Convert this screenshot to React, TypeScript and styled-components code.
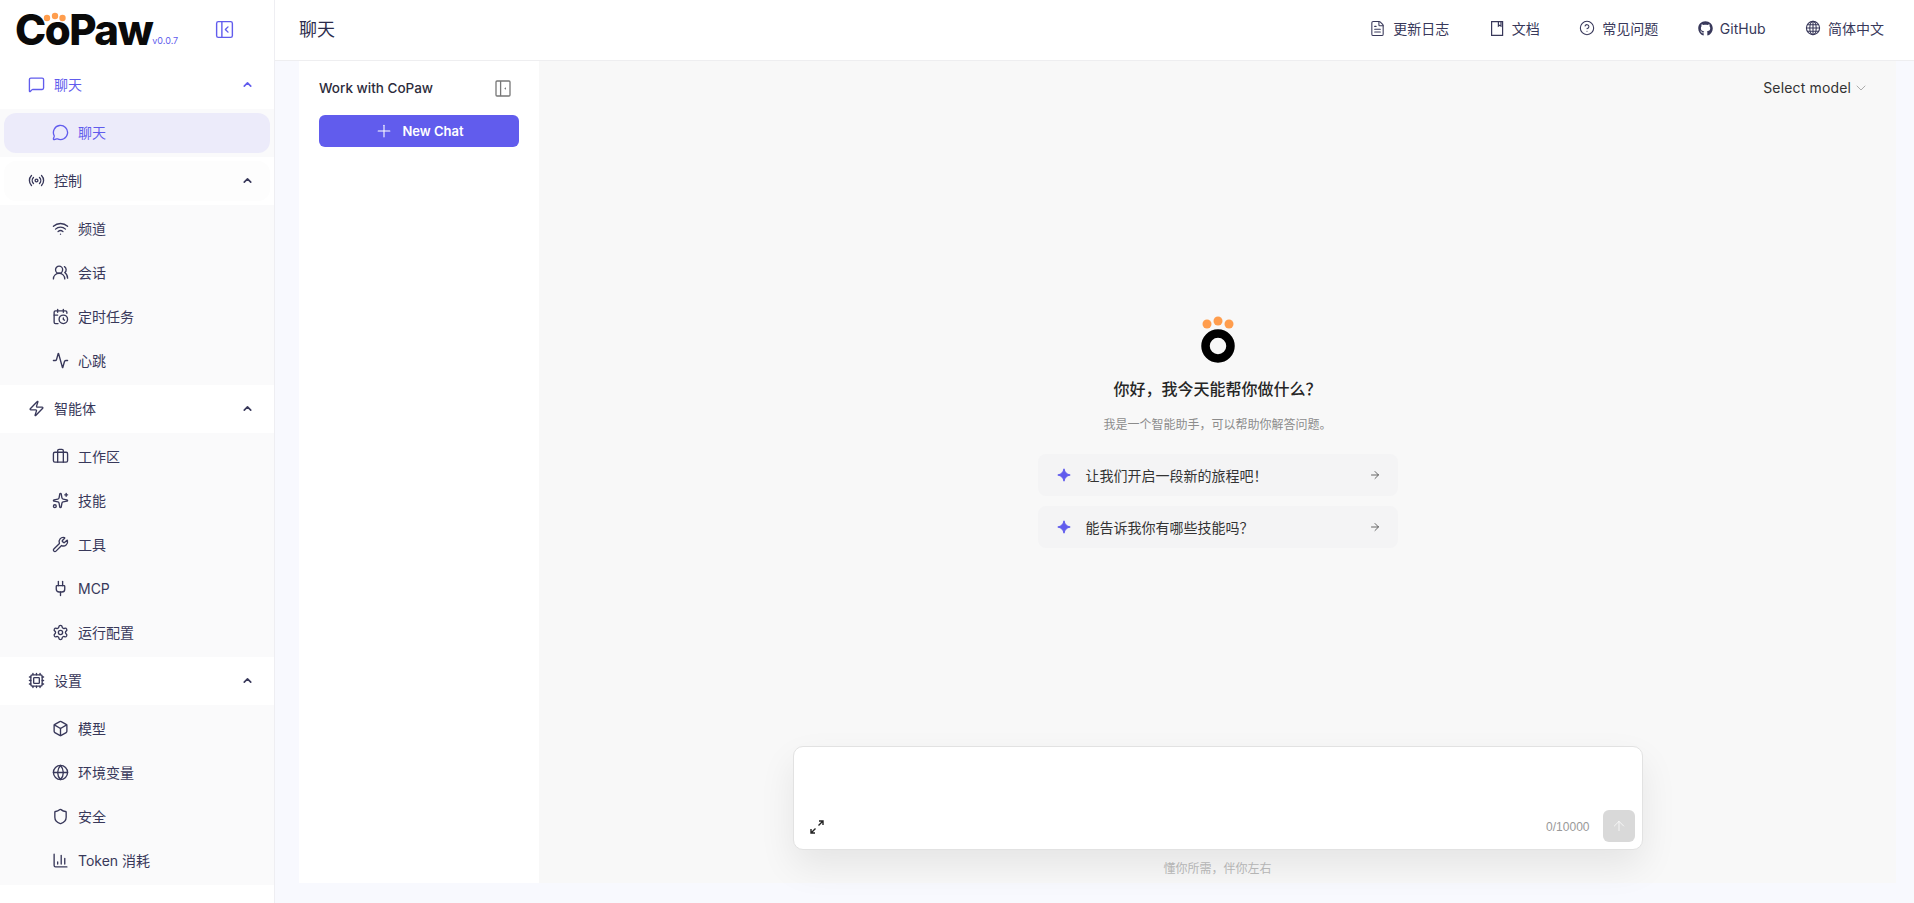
import styled, { createGlobalStyle } from 'styled-components';
import type { ReactNode } from 'react';
import {
  Activity,
  ArrowRight,
  ArrowUp,
  Box,
  Briefcase,
  CalendarClock,
  ChartColumn,
  ChevronDown,
  ChevronUp,
  CircleHelp,
  Cpu,
  FileText,
  Globe,
  MessageCircle,
  MessageSquare,
  PanelLeftClose,
  Plug,
  Plus,
  Radio,
  Settings,
  Shield,
  Sparkles,
  UsersRound,
  Wifi,
  Wrench,
  Zap,
} from 'lucide-react';
import { FaGithub } from 'react-icons/fa';

const GlobalStyle = createGlobalStyle`
  html, body, #root {
    margin: 0;
    height: 100%;
  }

  body {
    overflow: hidden;
    background: #f8f9fe;
    color: #38385a;
    font-family: Inter, "Noto Sans CJK SC", sans-serif;
    font-size: 14px;
  }
`;

const PRIMARY = '#615ced';

const Layout = styled.div`
  display: flex;
  height: 903px;
`;

const Sidebar = styled.aside`
  flex: 0 0 275px;
  box-sizing: border-box;
  background: #fff;
  border-right: 1px solid #eeeef2;
`;

const Brand = styled.div`
  height: 61px;
  box-sizing: border-box;
  display: flex;
  align-items: center;
  justify-content: space-between;
  padding: 0 39px 2px 15px;
  color: ${PRIMARY};
`;

const Logo = styled.div`
  position: relative;
  display: flex;
  align-items: flex-end;
`;

const LogoWord = styled.span`
  color: #0a0a0a;
  font-size: 42px;
  line-height: 38px;
  font-weight: 800;
  letter-spacing: -1.5px;
`;

const LogoVersion = styled.span`
  color: ${PRIMARY};
  font-size: 9px;
  line-height: 12px;
  margin: 0 0 2px 0;
`;

const LogoPaw = styled.svg`
  position: absolute;
  left: 28px;
  top: 0;
`;

const GroupRow = styled.div<{ $active?: boolean; $hovered?: boolean }>`
  height: 40px;
  box-sizing: border-box;
  margin: 4px;
  padding: 0 16px 2px 24px;
  display: flex;
  align-items: center;
  gap: 9px;
  border-radius: 12px;
  background: ${(p) => (p.$hovered ? '#fdfdfd' : 'transparent')};
  color: ${(p) => (p.$active ? PRIMARY : '#38385a')};
`;

const GroupLabel = styled.span`
  flex: 1;
`;

const SubList = styled.div`
  display: flex;
  flex-direction: column;
  gap: 4px;
  padding: 4px;
  background: #fafafb;
`;

const SubItem = styled.div<{ $active?: boolean }>`
  height: 40px;
  box-sizing: border-box;
  padding: 0 0 2px 48px;
  display: flex;
  align-items: center;
  gap: 9px;
  border-radius: 12px;
  background: ${(p) => (p.$active ? '#ecebfa' : 'transparent')};
  color: ${(p) => (p.$active ? PRIMARY : '#38385a')};
`;

const Main = styled.main`
  flex: 1;
  min-width: 0;
  display: flex;
  flex-direction: column;
`;

const TopBar = styled.header`
  flex: 0 0 61px;
  box-sizing: border-box;
  background: #fff;
  border-bottom: 1px solid #eeeef0;
  padding: 0 30px 4px 24px;
  display: flex;
  align-items: center;
  justify-content: space-between;
`;

const PageTitle = styled.h1`
  margin: 0;
  font-size: 18px;
  font-weight: 400;
  color: #2c2c4c;
`;

const TopNav = styled.nav`
  display: flex;
  align-items: center;
  gap: 39.5px;
`;

const TopLink = styled.a`
  display: flex;
  align-items: center;
  gap: 7px;
  font-size: 14px;
  color: #38385a;
`;

const Content = styled.div`
  flex: 1;
  min-height: 0;
  display: flex;
  padding: 0 18px 20px 24px;
`;

const SessionPanel = styled.section`
  flex: 0 0 240px;
  box-sizing: border-box;
  background: #fff;
  padding: 16px 20px;
`;

const SessionHead = styled.div`
  height: 22px;
  display: flex;
  align-items: center;
  justify-content: space-between;
  padding-right: 8px;
  margin-bottom: 16px;
  font-weight: 500;
  color: #2c2c3c;
  font-size: 13.5px;
`;

const NewChatButton = styled.button`
  width: 100%;
  height: 32px;
  border: 0;
  border-radius: 6px;
  background: ${PRIMARY};
  color: #fff;
  display: flex;
  align-items: center;
  justify-content: center;
  gap: 8px;
  font-family: inherit;
  font-size: 13px;
  font-weight: 600;
`;

const ChatPanel = styled.section`
  flex: 1;
  min-width: 0;
  background: #f8f8f8;
  display: flex;
  flex-direction: column;
  align-items: center;
`;

const ModelBar = styled.div`
  align-self: stretch;
  height: 54px;
  box-sizing: border-box;
  padding: 16px 27px 0 0;
  display: flex;
  justify-content: flex-end;
  align-items: flex-start;
  gap: 2px;
  font-size: 14px;
  line-height: 22px;
  letter-spacing: 0.15px;
  color: #333;
  svg {
    margin-top: 3px;
    color: #999;
  }
`;

const Welcome = styled.div`
  flex: 1;
  display: flex;
  flex-direction: column;
  align-items: center;
  padding-top: 201px;
`;

const WelcomeTitle = styled.h2`
  margin: 13px 0 0;
  font-size: 16px;
  line-height: 24px;
  font-weight: 500;
  color: #262626;
`;

const WelcomeText = styled.p`
  margin: 14px 0 0;
  font-size: 12px;
  line-height: 20px;
  color: #8c8c8c;
`;

const PromptList = styled.div`
  margin-top: 19px;
  width: 360px;
  display: flex;
  flex-direction: column;
  gap: 10px;
`;

const PromptCard = styled.div`
  height: 42px;
  box-sizing: border-box;
  padding: 0 17px 0 19px;
  border-radius: 8px;
  background: #f4f4f5;
  display: flex;
  align-items: center;
  gap: 15px;
  font-size: 14px;
  color: #333;
`;

const PromptText = styled.span`
  flex: 1;
`;

const InputBox = styled.div`
  width: 850px;
  height: 104px;
  box-sizing: border-box;
  background: #fff;
  border: 1px solid #e2e2e2;
  border-radius: 10px;
  box-shadow: 0 16px 36px rgba(0, 0, 0, 0.08);
  padding: 0 6px 6px 15px;
  display: flex;
  align-items: flex-end;
  justify-content: space-between;
`;

const ExpandButton = styled.div`
  height: 32px;
  display: flex;
  align-items: center;
  color: #222;
`;

const InputActions = styled.div`
  display: flex;
  align-items: center;
  gap: 13px;
`;

const Counter = styled.span`
  font-family: "Liberation Sans", sans-serif;
  font-size: 12px;
  color: #999;
`;

const SendButton = styled.div`
  width: 32px;
  height: 32px;
  margin: 0 1px 1px 0;
  border-radius: 6px;
  background: #d9d9d9;
  color: rgba(255, 255, 255, 0.75);
  display: flex;
  align-items: center;
  justify-content: center;
`;

const Disclaimer = styled.div`
  margin: 9px 0 4px;
  font-size: 12px;
  line-height: 20px;
  color: #b5b5b5;
`;

type NavItem = { icon: ReactNode; label: string; active?: boolean };
type NavGroup = { icon: ReactNode; label: string; active?: boolean; hovered?: boolean; items: NavItem[] };

const ic = { size: 17, strokeWidth: 1.9 };

const groups: NavGroup[] = [
  {
    icon: <MessageSquare {...ic} />,
    label: '聊天',
    active: true,
    items: [{ icon: <MessageCircle {...ic} />, label: '聊天', active: true }],
  },
  {
    icon: <Radio {...ic} />,
    label: '控制',
    hovered: true,
    items: [
      { icon: <Wifi {...ic} />, label: '频道' },
      { icon: <UsersRound {...ic} />, label: '会话' },
      { icon: <CalendarClock {...ic} />, label: '定时任务' },
      { icon: <Activity {...ic} />, label: '心跳' },
    ],
  },
  {
    icon: <Zap {...ic} />,
    label: '智能体',
    items: [
      { icon: <Briefcase {...ic} />, label: '工作区' },
      { icon: <Sparkles {...ic} />, label: '技能' },
      { icon: <Wrench {...ic} />, label: '工具' },
      { icon: <Plug {...ic} />, label: 'MCP' },
      { icon: <Settings {...ic} />, label: '运行配置' },
    ],
  },
  {
    icon: <Cpu {...ic} />,
    label: '设置',
    items: [
      { icon: <Box {...ic} />, label: '模型' },
      { icon: <Globe {...ic} />, label: '环境变量' },
      { icon: <Shield {...ic} />, label: '安全' },
      { icon: <ChartColumn {...ic} />, label: 'Token 消耗' },
    ],
  },
];

const DocIcon = () => (
  <svg width="16" height="15" viewBox="0 0 16 15" fill="none" stroke="currentColor" strokeWidth="1.2">
    <path d="M2.6 .6h11v13.8h-11z" />
    <path d="M9.4 .6v4.6l1.3-.9 1.3.9V.6" />
  </svg>
);

const LangIcon = () => (
  <svg width="16" height="16" viewBox="0 0 16 16" fill="none" stroke="currentColor" strokeWidth="1.1">
    <circle cx="8" cy="8" r="6.6" />
    <ellipse cx="8" cy="8" rx="3.2" ry="6.6" />
    <path d="M8 1.4v13.2M1.4 8h13.2M2.4 4.8h11.2M2.4 11.2h11.2" />
  </svg>
);

const topLinks: NavItem[] = [
  { icon: <FileText size={17} strokeWidth={1.5} />, label: '更新日志' },
  { icon: <DocIcon />, label: '文档' },
  { icon: <CircleHelp size={16} strokeWidth={1.6} />, label: '常见问题' },
  { icon: <FaGithub size={15} />, label: 'GitHub' },
  { icon: <LangIcon />, label: '简体中文' },
];

const prompts = ['让我们开启一段新的旅程吧！', '能告诉我你有哪些技能吗？'];

const Sparkle = () => (
  <svg width="14" height="14" viewBox="0 0 14 14">
    <path d="M7 .8 C7.8 4.4 9.6 6.2 13.2 7 C9.6 7.8 7.8 9.6 7 13.2 C6.2 9.6 4.4 7.8 .8 7 C4.4 6.2 6.2 4.4 7 .8 Z" fill={PRIMARY} stroke={PRIMARY} strokeWidth="1" strokeLinejoin="round" />
  </svg>
);

const PawMark = () => (
  <svg width="36" height="48" viewBox="0 0 36 48">
    <circle cx="7" cy="8" r="4.5" fill="#ff9d4d" />
    <circle cx="18" cy="5" r="4.5" fill="#ff9d4d" />
    <circle cx="29" cy="8" r="4.5" fill="#ff9d4d" />
    <circle cx="18" cy="30" r="12.5" fill="none" stroke="#000" strokeWidth="8.5" />
  </svg>
);

const ExpandIcon = () => (
  <svg width="16" height="16" viewBox="0 0 16 16" fill="none" stroke="currentColor" strokeWidth="1.4">
    <path d="M9.5 6.5 14 2M10 2h4v4M6.5 9.5 2 14M2 10v4h4" />
  </svg>
);

const PanelIcon = () => (
  <svg width="16" height="17" viewBox="0 0 16 17" fill="none" stroke="#777" strokeWidth="1.3">
    <rect x="1" y="1" width="14" height="15" rx="1" />
    <path d="M5.6 1v15" />
    <path d="M11 7.2v2.6L9.2 8.5z" fill="#777" stroke="none" />
  </svg>
);

const SideNav = () => (
  <Sidebar>
    <Brand>
      <Logo>
        <LogoWord>CoPaw</LogoWord>
        <LogoVersion>v0.0.7</LogoVersion>
        <LogoPaw width="24" height="12" viewBox="0 0 24 12">
          <circle cx="4" cy="7" r="3.2" fill="#ff9d4d" />
          <circle cx="12" cy="5" r="3.2" fill="#ff9d4d" />
          <circle cx="19.5" cy="7" r="3.2" fill="#ff9d4d" />
        </LogoPaw>
      </Logo>
      <PanelLeftClose size={21} strokeWidth={1.6} />
    </Brand>
    {groups.map((group) => (
      <div key={group.label}>
        <GroupRow $active={group.active} $hovered={group.hovered}>
          {group.icon}
          <GroupLabel>{group.label}</GroupLabel>
          <ChevronUp size={13} strokeWidth={3} />
        </GroupRow>
        <SubList>
          {group.items.map((item) => (
            <SubItem key={item.label} $active={item.active}>
              {item.icon}
              {item.label}
            </SubItem>
          ))}
        </SubList>
      </div>
    ))}
  </Sidebar>
);

export default function App() {
  return (
    <Layout>
      <GlobalStyle />
      <SideNav />
      <Main>
        <TopBar>
          <PageTitle>聊天</PageTitle>
          <TopNav>
            {topLinks.map((link) => (
              <TopLink key={link.label}>
                {link.icon}
                {link.label}
              </TopLink>
            ))}
          </TopNav>
        </TopBar>
        <Content>
          <SessionPanel>
            <SessionHead>
              Work with CoPaw
              <PanelIcon />
            </SessionHead>
            <NewChatButton>
              <Plus size={20} strokeWidth={1.3} />
              New Chat
            </NewChatButton>
          </SessionPanel>
          <ChatPanel>
            <ModelBar>
              Select model
              <ChevronDown size={16} strokeWidth={1.2} />
            </ModelBar>
            <Welcome>
              <PawMark />
              <WelcomeTitle>你好，我今天能帮你做什么？</WelcomeTitle>
              <WelcomeText>我是一个智能助手，可以帮助你解答问题。</WelcomeText>
              <PromptList>
                {prompts.map((text) => (
                  <PromptCard key={text}>
                    <Sparkle />
                    <PromptText>{text}</PromptText>
                    <ArrowRight size={12} strokeWidth={1.8} color="#555" />
                  </PromptCard>
                ))}
              </PromptList>
            </Welcome>
            <InputBox>
              <ExpandButton>
                <ExpandIcon />
              </ExpandButton>
              <InputActions>
                <Counter>0/10000</Counter>
                <SendButton>
                  <ArrowUp size={16} strokeWidth={1.5} />
                </SendButton>
              </InputActions>
            </InputBox>
            <Disclaimer>懂你所需，伴你左右</Disclaimer>
          </ChatPanel>
        </Content>
      </Main>
    </Layout>
  );
}
